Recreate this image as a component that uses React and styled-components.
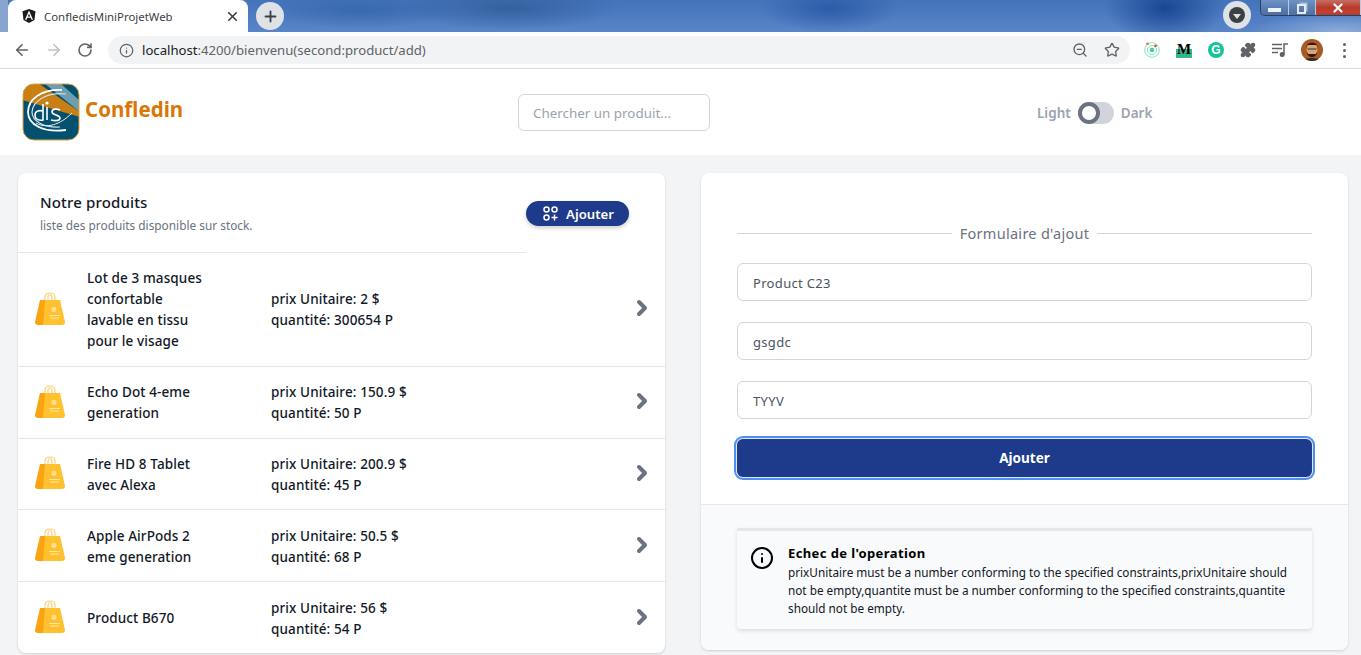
import React from "react";
import styled, { createGlobalStyle } from "styled-components";
import { FaAngular } from "react-icons/fa";
import { ArrowLeft, ArrowRight, RotateCw, Info, ZoomOut, Star, Plus, X, Puzzle, ChevronRight } from "lucide-react";

const GlobalStyle = createGlobalStyle`
  html, body { margin: 0; padding: 0; height: 100%; overflow: hidden; background: #f3f4f6; }
  * { box-sizing: border-box; }
  body { font-family: "Noto Sans", "Open Sans", sans-serif; color: #111827; }
`;

/* browser chrome */
const TabStrip = styled.div`
  height: 32px;
  display: flex;
  align-items: flex-end;
  overflow: hidden;
  background:
    radial-gradient(ellipse 60px 34px at 1165px 8px, #1a4793 0%, rgba(26, 71, 147, 0) 100%),
    radial-gradient(ellipse 90px 20px at 1340px 32px, #8dacd9 0%, rgba(141, 172, 217, 0) 100%),
    radial-gradient(ellipse 70px 24px at 830px 8px, #2c5ca8 0%, rgba(44, 92, 168, 0) 100%),
    radial-gradient(ellipse 110px 22px at 510px 8px, #33619f 0%, rgba(51, 97, 159, 0) 100%),
    radial-gradient(ellipse 100px 18px at 360px 10px, #3868ae 0%, rgba(56, 104, 174, 0) 100%),
    linear-gradient(90deg, #88a5cf 0 8px, transparent 8px),
    linear-gradient(180deg, #4373ba 0%, #5985c8 100%);
`;
const Tab = styled.div`
  width: 240px;
  height: 32px;
  margin-left: 8px;
  padding: 0 8px 0 13px;
  display: flex;
  align-items: center;
  gap: 7px;
  background: #fff;
  border-radius: 8px 8px 0 0;
  font-size: 11.4px;
  color: #3c4043;
`;
const TabTitle = styled.span`flex: 1;`;
const NewTab = styled.div`
  width: 28px;
  height: 28px;
  margin: 0 0 2px 8px;
  border-radius: 50%;
  background: #dee1e6;
  color: #3c4043;
  display: flex;
  align-items: center;
  justify-content: center;
`;
const StripRight = styled.div`
  margin-left: auto;
  height: 32px;
  display: flex;
  align-items: flex-start;
`;
const ProfileDrop = styled.div`
  width: 28px;
  height: 28px;
  margin: 1px 9px 0 0;
  border-radius: 50%;
  background: #dee1e6;
  display: flex;
  align-items: center;
  justify-content: center;
`;
const ProfileDot = styled.div`
  width: 16px;
  height: 16px;
  border-radius: 50%;
  background: #3c4043;
  display: flex;
  align-items: center;
  justify-content: center;
  &::after {
    content: "";
    border-left: 4px solid transparent;
    border-right: 4px solid transparent;
    border-top: 5px solid #dee1e6;
    margin-top: 2px;
  }
`;
const WinButtons = styled.div`
  width: 101px;
  height: 16px;
  display: flex;
  border: 1px solid #2b3f60;
  border-top: 0;
  border-right: 0;
  border-radius: 0 0 0 5px;
  overflow: hidden;
`;
const WinButton = styled.div`
  width: ${(p) => p.$w}px;
  flex: ${(p) => (p.$w ? "none" : 1)};
  display: flex;
  align-items: center;
  justify-content: center;
  background: ${(p) =>
    p.$close
      ? "linear-gradient(180deg,#c66f63 0%,#b53a2a 50%,#c8402c 80%,#9e4438 100%)"
      : "linear-gradient(180deg,#6f93c6 0%,#5a7fb3 50%,#4f6f9f 100%)"};
  border-right: 1px solid #b9c9df;
  color: #eef1f5;
`;
const MinBar = styled.div`
  width: 13px;
  height: 4px;
  margin-top: 4px;
  background: #eef1f5;
`;
const MaxBox = styled.div`
  width: 9px;
  height: 10px;
  margin: 2px 0 0 -2px;
  border: 2px solid #e6ebf2;
  box-shadow: 2px -2px 0 -0.5px #aebed6;
`;
const Toolbar = styled.div`
  height: 37px;
  background: #fff;
  border-bottom: 1px solid #dadce0;
  display: flex;
  align-items: center;
  padding-left: 13px;
  color: #5f6368;
`;
const NavIcons = styled.div`
  display: flex;
  align-items: center;
  gap: 14px;
  width: 95px;
`;
const Omnibox = styled.div`
  width: 1022px;
  height: 28px;
  border-radius: 14px;
  background: #f1f3f4;
  display: flex;
  align-items: center;
  padding: 0 10px 0 11px;
  font-size: 13.15px;
`;
const Host = styled.span`color: #202124; margin-left: 8px;`;
const UrlRest = styled.span`color: #5f6368;`;
const OmniEnd = styled.div`
  margin-left: auto;
  display: flex;
  align-items: center;
  gap: 16px;
`;
const Extensions = styled.div`
  display: grid;
  grid-template-columns: repeat(7, 32px);
  justify-items: center;
  align-items: center;
  padding-left: 6px;
`;
const ExtM = styled.div`
  width: 16px;
  height: 16px;
  background: linear-gradient(180deg, #fff 0 45%, #35b58c 45% 100%);
  font-family: "Liberation Serif", serif;
  font-weight: 700;
  font-size: 15px;
  line-height: 15px;
  color: #000;
  text-align: center;
`;
const ExtG = styled.div`
  width: 16px;
  height: 16px;
  border-radius: 50%;
  background: #15c39a;
  color: #fff;
  font-family: "Liberation Sans", Arial, sans-serif;
  font-weight: 700;
  font-size: 12px;
  line-height: 16px;
  text-align: center;
`;
const Avatar = styled.div`
  width: 22px;
  height: 22px;
  border-radius: 50%;
  overflow: hidden;
`;
const Dots = styled.div`
  display: flex;
  flex-direction: column;
  gap: 3px;
  & > i { width: 3px; height: 3px; border-radius: 50%; background: #5f6368; display: block; }
`;

/* app header */
const Header = styled.header`
  height: 86px;
  background: #fff;
  display: flex;
  align-items: center;
  padding: 0 0 0 22px;
`;
const Brand = styled.div`
  width: 496px;
  display: flex;
  align-items: center;
  gap: 5px;
`;
const BrandName = styled.span`
  font-size: 20.5px;
  font-weight: 700;
  color: #d97706;
  margin-top: -6px;
`;
const Search = styled.input`
  width: 192px;
  height: 37px;
  padding: 2px 14px 0;
  border: 1px solid #d1d5db;
  border-radius: 6px;
  background: #fff;
  font-family: inherit;
  font-size: 13.4px;
  outline: none;
  &::placeholder { color: #9ca3af; opacity: 1; }
`;
const ThemeSwitch = styled.div`
  margin: 1px 0 0 327px;
  display: flex;
  align-items: center;
  gap: 7px;
  font-size: 13.5px;
  font-weight: 600;
  color: #9ca3af;
`;
const Track = styled.div`
  width: 36px;
  height: 22px;
  border-radius: 11px;
  background: #d1d5db;
`;
const Knob = styled.div`
  width: 22px;
  height: 22px;
  border-radius: 50%;
  background: #fff;
  border: 4px solid #6b7280;
`;

/* main */
const Main = styled.main`
  display: grid;
  grid-template-columns: 647px 647px;
  gap: 36px;
  padding: 18px 13px 0 18px;
  align-items: start;
`;
const Card = styled.section`
  background: #fff;
  border-radius: 8px;
  overflow: hidden;
  box-shadow: 0 1px 3px rgba(0, 0, 0, 0.1), 0 1px 2px rgba(0, 0, 0, 0.06);
`;
const ListHead = styled.div`
  display: flex;
  align-items: flex-start;
`;
const HeadText = styled.div`
  width: 508px;
  height: 80px;
  padding: 18px 22px 0;
  border-bottom: 1px solid #e5e7eb;
`;
const HeadTitle = styled.h2`
  margin: 0;
  font-size: 15px;
  font-weight: 500;
  line-height: 22px;
  letter-spacing: 0.01em;
  color: #111827;
`;
const HeadSub = styled.p`
  margin: 4px 0 0;
  font-size: 11.85px;
  line-height: 16px;
  color: #6b7280;
`;
const AddPill = styled.button`
  width: 103px;
  height: 25px;
  margin-top: 28px;
  padding: 0 0 0 2px;
  border: 0;
  border-radius: 13px;
  background: #1e3a8a;
  color: #fff;
  font-family: inherit;
  font-size: 13.2px;
  font-weight: 600;
  display: flex;
  align-items: center;
  justify-content: center;
  gap: 8px;
  box-shadow: 0 2px 4px rgba(0, 0, 0, 0.2);
`;
const Row = styled.div`
  display: flex;
  align-items: center;
  padding: 15.4px 17px 13.4px;
  border-top: ${(p) => (p.$first ? "0" : "1px solid #e5e7eb")};
  font-size: 13.5px;
  line-height: 21px;
  font-weight: 500;
  letter-spacing: 0.008em;
  color: #111827;
`;
const BagWrap = styled.div`
  display: flex;
  margin-top: -3px;
`;
const ProdName = styled.div`
  width: 133px;
  margin: 0 51px 0 22px;
`;
const ProdInfo = styled.div`flex: 1;`;
const Chevron = styled(ChevronRight)`
  color: #6b7280;
  margin: -4px -6px 0 0;
`;

/* form */
const FormPart = styled.div`
  height: 332px;
  padding: 51px 36px 0;
  border-bottom: 1px solid #e5e7eb;
`;
const Legend = styled.div`
  display: flex;
  align-items: center;
  gap: 8px;
  height: 18px;
  font-size: 14.5px;
  letter-spacing: 0.02em;
  color: #6b7280;
  &::before, &::after { content: ""; flex: 1; height: 1px; background: #d1d5db; }
`;
const Field = styled.input`
  display: block;
  width: 100%;
  height: 38px;
  margin-top: ${(p) => p.$top || 21}px;
  padding: 1px 15px 0;
  border: 1px solid #d1d5db;
  border-radius: 6px;
  background: #fff;
  font-family: inherit;
  font-size: 13px;
  letter-spacing: 0.025em;
  color: #4b5563;
  outline: none;
`;
const Submit = styled.button`
  display: block;
  width: 100%;
  height: 38px;
  margin-top: 20px;
  border: 0;
  border-radius: 6px;
  background: #1e3a8a;
  color: #fff;
  font-family: inherit;
  font-size: 13.5px;
  font-weight: 700;
  box-shadow: 0 0 0 1px #dbe7fb, 0 0 0 3px #4f8ff0;
`;
const FormFoot = styled.div`
  height: 145px;
  padding: 23px 36px 0;
  background: #f9fafb;
`;
const Alert = styled.div`
  height: 101px;
  display: flex;
  gap: 14px;
  padding: 12px 13px 0;
  background: #f9fafb;
  border-top: 3px solid #e5e7eb;
  border-radius: 0 0 4px 4px;
  box-shadow: 0 2px 4px rgba(0, 0, 0, 0.12);
  color: #000;
`;
const AlertIcon = styled(Info)`
  flex: none;
  margin-top: 3px;
`;
const AlertBody = styled.div`
  font-size: 11.75px;
  line-height: 18px;
  color: #111827;
`;
const AlertTitle = styled.div`
  font-size: 13px;
  font-weight: 700;
  line-height: 20px;
  letter-spacing: 0.03em;
  color: #000;
`;

const Logo = () => (
  <svg width="58" height="58" viewBox="0 0 58 58">
    <defs>
      <clipPath id="lg"><rect x="1" y="1" width="56" height="56" rx="11" /></clipPath>
    </defs>
    <g clipPath="url(#lg)">
      <rect width="58" height="58" fill="#04506f" />
      <path d="M0 4 L16 0 L58 29 V34 L0 17 Z" fill="#c77f16" />
      <path d="M22 0 H38 L58 18 V29 Z" fill="#6f9db0" />
      <path d="M40 7 C20 6 6 16 6 29 C6 42 22 50 44 47" fill="none" stroke="#fff" strokeWidth="1.8" />
      <path d="M44 11 C26 9 11 17 10 29 C10 38 22 45 38 44" fill="none" stroke="#cfe0e8" strokeWidth="1.2" />
      <path d="M14 40 C24 46 38 42 50 30" fill="none" stroke="#e8f0f4" strokeWidth="1" />
      <circle cx="25" cy="20" r="1.6" fill="#fff" />
      <path d="M21 21 V37 C15 38 13 35 13 32 C13 28 17 27 21 28" fill="none" stroke="#fff" strokeWidth="1.6" />
      <path d="M25 24 V37" stroke="#fff" strokeWidth="1.6" />
      <path d="M38 27 C34 25 30 26 30 29 C30 32 38 32 38 35 C38 38 33 38 29 37" fill="none" stroke="#fff" strokeWidth="1.6" />
    </g>
    <rect x="1" y="1" width="56" height="56" rx="11" fill="none" stroke="#e3a33a" strokeWidth="1" />
  </svg>
);

const Bag = () => (
  <svg width="30" height="34" viewBox="0 0 30 34">
    <path d="M10 12 V5 C10 1 14 1 15 1 C16 1 20 1 20 5 V12 M13 12 V5 C13 2 17 2 17 5 V12" fill="none" stroke="#fbd27a" strokeWidth="1.2" />
    <path d="M5 8 H12 L9 33 H3 C1 33 0 32 0 30 Z" fill="#f9a410" />
    <path d="M10 8 H25 L30 30 C30 32 29 33 27 33 H8 Z" fill="#ffc12e" />
    <rect x="16.5" y="15" width="5" height="5" rx="2" fill="#ffdf8c" />
    <path d="M14 23.5 H25 M15 26 H24" stroke="#ffe9b8" strokeWidth="0.9" />
  </svg>
);

const GridPlus = () => (
  <svg width="15" height="15" viewBox="0 0 15 15" fill="none" stroke="#fff" strokeWidth="1.5">
    <circle cx="3.5" cy="3.5" r="2.5" />
    <circle cx="11.5" cy="3.5" r="2.5" />
    <circle cx="3.5" cy="11.5" r="2.5" />
    <path d="M11.5 8.5 V14.5 M8.5 11.5 H14.5" />
  </svg>
);

const Radar = () => (
  <svg width="16" height="16" viewBox="0 0 16 16" fill="none">
    <circle cx="8" cy="8" r="7.3" stroke="#7ee8c0" strokeWidth="1" />
    <circle cx="8" cy="8" r="4.6" stroke="#7ee8c0" strokeWidth="1" />
    <circle cx="8" cy="8" r="2.3" fill="#4fd08f" />
    <circle cx="3.5" cy="1.8" r="1.4" fill="#f0743e" />
    <circle cx="11.5" cy="3.8" r="1.4" fill="#e8503a" />
  </svg>
);

const QueueMusic = () => (
  <svg width="16" height="14" viewBox="0 0 16 14" fill="none" stroke="#5f6368" strokeWidth="1.5">
    <path d="M0 1.5 H10 M0 5.5 H10 M0 9.5 H6" />
    <path d="M12 11.5 V1 H16" />
    <circle cx="10.2" cy="11.5" r="1.8" fill="#5f6368" />
  </svg>
);

const Face = () => (
  <svg width="22" height="22" viewBox="0 0 22 22">
    <rect width="22" height="22" fill="#a85a22" />
    <ellipse cx="11" cy="11" rx="5.5" ry="7" fill="#d9a47c" />
    <path d="M5 9 C5 2 17 2 17 9 L16 6 H6 Z" fill="#2b1a12" />
    <path d="M5.5 12 C6 20 16 20 16.5 12 L15 15 H7 Z" fill="#2b1a12" />
    <path d="M6.5 10 H15.5" stroke="#3a2a22" strokeWidth="1" />
    <path d="M2 22 C4 18 18 18 20 22 Z" fill="#3a2a22" />
  </svg>
);

const products = [
  { lines: ["Lot de 3 masques", "confortable", "lavable en tissu", "pour le visage"], price: "2", qty: "300654" },
  { lines: ["Echo Dot 4-eme", "generation"], price: "150.9", qty: "50" },
  { lines: ["Fire HD 8 Tablet", "avec Alexa"], price: "200.9", qty: "45" },
  { lines: ["Apple AirPods 2", "eme generation"], price: "50.5", qty: "68" },
  { lines: ["Product B670"], price: "56", qty: "54" },
];

const App = () => {
  return (
    <>
      <GlobalStyle />
      <TabStrip>
        <Tab>
          <FaAngular size={16} color="#1a1a1a" />
          <TabTitle>ConfledisMiniProjetWeb</TabTitle>
          <X size={15} strokeWidth={2.6} color="#3c4043" />
        </Tab>
        <NewTab><Plus size={17} strokeWidth={2.6} /></NewTab>
        <StripRight>
          <ProfileDrop><ProfileDot /></ProfileDrop>
          <WinButtons>
            <WinButton $w={28}><MinBar /></WinButton>
            <WinButton $w={27}><MaxBox /></WinButton>
            <WinButton $close><X size={14} strokeWidth={4} /></WinButton>
          </WinButtons>
        </StripRight>
      </TabStrip>
      <Toolbar>
        <NavIcons>
          <ArrowLeft size={18} strokeWidth={2.2} />
          <ArrowRight size={18} strokeWidth={2.2} color="#bdc1c6" />
          <RotateCw size={16} strokeWidth={2.4} />
        </NavIcons>
        <Omnibox>
          <Info size={15} color="#5f6368" />
          <Host>localhost<UrlRest>:4200/bienvenu(second:product/add)</UrlRest></Host>
          <OmniEnd>
            <ZoomOut size={16} color="#5f6368" />
            <Star size={16} color="#5f6368" />
          </OmniEnd>
        </Omnibox>
        <Extensions>
          <Radar />
          <ExtM>M</ExtM>
          <ExtG>G</ExtG>
          <Puzzle size={16} fill="#5f6368" color="#5f6368" />
          <QueueMusic />
          <Avatar><Face /></Avatar>
          <Dots><i /><i /><i /></Dots>
        </Extensions>
      </Toolbar>

      <Header>
        <Brand>
          <Logo />
          <BrandName>Confledin</BrandName>
        </Brand>
        <Search placeholder="Chercher un produit..." readOnly />
        <ThemeSwitch>
          Light
          <Track><Knob /></Track>
          Dark
        </ThemeSwitch>
      </Header>

      <Main>
        <Card>
          <ListHead>
            <HeadText>
              <HeadTitle>Notre produits</HeadTitle>
              <HeadSub>liste des produits disponible sur stock.</HeadSub>
            </HeadText>
            <AddPill><GridPlus />Ajouter</AddPill>
          </ListHead>
          {products.map((p, i) => (
            <Row key={p.qty} $first={i === 0}>
              <BagWrap><Bag /></BagWrap>
              <ProdName>
                {p.lines.map((l) => <div key={l}>{l}</div>)}
              </ProdName>
              <ProdInfo>
                <div>prix Unitaire: {p.price} $</div>
                <div>quantité: {p.qty} P</div>
              </ProdInfo>
              <Chevron size={24} strokeWidth={4} />
            </Row>
          ))}
        </Card>

        <Card>
          <FormPart>
            <Legend>Formulaire d'ajout</Legend>
            <Field $top={21} defaultValue="Product C23" />
            <Field defaultValue="gsgdc" />
            <Field defaultValue="TYYV" />
            <Submit>Ajouter</Submit>
          </FormPart>
          <FormFoot>
            <Alert>
              <AlertIcon size={24} strokeWidth={2} />
              <AlertBody>
                <AlertTitle>Echec de l'operation</AlertTitle>
                prixUnitaire must be a number conforming to the specified constraints,prixUnitaire should not be empty,quantite must be a number conforming to the specified constraints,quantite should not be empty.
              </AlertBody>
            </Alert>
          </FormFoot>
        </Card>
      </Main>
    </>
  );
};

export default App;
